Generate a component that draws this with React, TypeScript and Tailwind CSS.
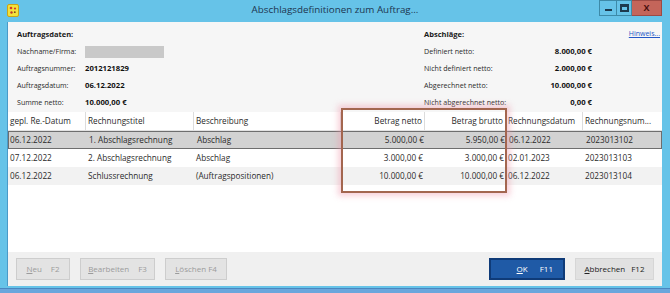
import React from 'react'

// Abschlagsdefinitionen dialog (Windows style)

const font = { fontFamily: '"Open Sans", "Liberation Sans", sans-serif' }

const columns = [
  { label: 'gepl. Re.-Datum', width: 'w-[78px]', align: 'text-left' },
  { label: 'Rechnungstitel', width: 'w-[108px]', align: 'text-left' },
  { label: 'Beschreibung', width: 'w-[147px]', align: 'text-left' },
  { label: 'Betrag netto', width: 'w-[84px]', align: 'text-right' },
  { label: 'Betrag brutto', width: 'w-[81px]', align: 'text-right' },
  { label: 'Rechnungsdatum', width: 'w-[77px]', align: 'text-left' },
  { label: 'Rechnungsnum...', width: 'w-[73px]', align: 'text-left' },
]

const rows = [
  ['06.12.2022', '1. Abschlagsrechnung', 'Abschlag', '5.000,00 €', '5.950,00 €', '06.12.2022', '2023013102'],
  ['07.12.2022', '2. Abschlagsrechnung', 'Abschlag', '3.000,00 €', '3.000,00 €', '02.01.2023', '2023013103'],
  ['06.12.2022', 'Schlussrechnung', '(Auftragspositionen)', '10.000,00 €', '10.000,00 €', '06.12.2022', '2023013104'],
]

const leftInfo = [
  { label: 'Nachname/Firma:', value: null },
  { label: 'Auftragsnummer:', value: '2012121829' },
  { label: 'Auftragsdatum:', value: '06.12.2022' },
  { label: 'Summe netto:', value: '10.000,00 €' },
]

const rightInfo = [
  { label: 'Definiert netto:', value: '8.000,00 €' },
  { label: 'Nicht definiert netto:', value: '2.000,00 €' },
  { label: 'Abgerechnet netto:', value: '10.000,00 €' },
  { label: 'Nicht abgerechnet netto:', value: '0,00 €' },
]

function AppIcon() {
  return (
    <svg width="12" height="13" viewBox="0 0 12 13">
      <rect x="0.5" y="0.5" width="11" height="12" rx="1.5" fill="#f3e23a" stroke="#c9a516" />
      <circle cx="4" cy="4" r="1.3" fill="#d33a2a" />
      <circle cx="8" cy="4.5" r="1.1" fill="#d33a2a" />
      <circle cx="4.5" cy="8.5" r="1.2" fill="#c0392b" />
      <circle cx="7.8" cy="8.2" r="0.9" fill="#7a3f1a" />
    </svg>
  )
}

function DisabledButton({ label, rest, hotkey, width }: { label: string; rest: string; hotkey: string; width: string }) {
  return (
    <div className={`${width} h-[22px] flex items-center justify-center gap-[9px] bg-[#e3e3e3] border border-[#cdcdcd] text-[8px] text-[#9b9b9b]`}>
      <span>
        <span className="underline">{label}</span>
        {rest}
      </span>
      {hotkey && <span>{hotkey}</span>}
    </div>
  )
}

export default function App() {
  return (
    <div className="w-[670px] h-[293px] bg-[#66c3e8] flex flex-col relative overflow-hidden" style={font}>
      {/* Title bar */}
      <div className="h-[22px] flex items-start relative">
        <div className="ml-[7px] mt-[4px]">
          <AppIcon />
        </div>
        <div className="absolute left-0 right-0 top-[3px] text-center text-[9.8px] text-[#1d3550]">
          Abschlagsdefinitionen zum Auftrag...
        </div>
        <div className="ml-auto mr-[8px] flex h-[16px]">
          <div className="w-[17px] border border-[#3d8aa8] border-r-0 flex items-end justify-center pb-[4px]">
            <div className="w-[7px] h-[2px] bg-[#1d3a4e]" />
          </div>
          <div className="w-[16px] border border-[#3d8aa8] flex items-center justify-center">
            <div className="w-[9px] h-[8px] border-[2px] border-[#1d3a4e] border-t-[3px]" />
          </div>
          <div className="w-[30px] bg-[#c4655a] border border-[#9d4a44] border-l-0 flex items-center justify-center text-[9px] font-bold text-[#4a1010]">
            X
          </div>
        </div>
      </div>

      {/* Client area */}
      <div className="flex-1 ml-[7px] mr-[8px] mb-[7px] flex flex-col bg-white border-l border-[#4a9ac8]">
        {/* Info panel */}
        <div className="h-[90px] bg-[#f6f6f6] flex pt-[4px]">
          <div className="w-[416px] pl-[9px]">
            <div className="h-[17px] flex items-center text-[7.5px] font-bold text-[#1a1a1a]">Auftragsdaten:</div>
            {leftInfo.map((item) => (
              <div key={item.label} className="h-[17px] flex items-center text-[7.1px] text-[#2a2a2a]">
                <span className="w-[68px]">{item.label}</span>
                {item.value ? (
                  <span className="text-[7.7px] font-bold text-[#111]">{item.value}</span>
                ) : (
                  <span className="w-[79px] h-[12px] bg-[#c9c9c9]" />
                )}
              </div>
            ))}
          </div>
          <div className="w-[168px]">
            <div className="h-[17px] flex items-center text-[7.5px] font-bold text-[#1a1a1a]">Abschläge:</div>
            {rightInfo.map((item) => (
              <div key={item.label} className="h-[17px] flex items-center justify-between text-[7.1px] text-[#2a2a2a]">
                <span>{item.label}</span>
                <span className="text-[7.7px] font-bold text-[#111]">{item.value}</span>
              </div>
            ))}
          </div>
          <div className="flex-1 flex justify-end pr-[2px]">
            <div className="h-[17px] flex items-center text-[7px] text-[#2357c7] underline">Hinweis...</div>
          </div>
        </div>

        {/* Table */}
        <div className="flex-1 bg-white flex flex-col">
          <div className="h-[19px] flex items-center border-b border-[#e2e2e2] text-[8.2px] text-[#2a2a2a]">
            {columns.map((c, i) => (
              <div
                key={c.label}
                className={`${c.width} ${c.align} h-full flex items-center ${c.align === 'text-right' ? 'justify-end' : ''} px-[2px] whitespace-nowrap ${i < columns.length - 1 ? 'border-r border-[#dcdcdc]' : ''}`}
              >
                {c.label}
              </div>
            ))}
          </div>
          {rows.map((r, ri) => (
            <div
              key={ri}
              className={`h-[18px] flex items-center text-[8.2px] text-[#2a2a2a] ${
                ri === 0 ? 'bg-[#d2d2d2] border border-[#6e6e6e]' : ri === 2 ? 'bg-[#f2f2f2]' : 'bg-white'
              }`}
            >
              {r.map((cell, ci) => (
                <div
                  key={ci}
                  className={`${columns[ci].width} flex ${columns[ci].align === 'text-right' ? 'justify-end' : ''} ${ci === 0 && ri === 0 ? 'pl-[1px]' : 'pl-[2px]'} pr-[2px] whitespace-nowrap`}
                >
                  {cell}
                </div>
              ))}
            </div>
          ))}
        </div>

        {/* Button bar */}
        <div className="h-[34px] bg-[#f0f0f0] flex items-center pl-[8px] pr-[8px] gap-[10px]">
          <DisabledButton label="N" rest="eu" hotkey="F2" width="w-[54px]" />
          <DisabledButton label="B" rest="earbeiten" hotkey="F3" width="w-[75px]" />
          <DisabledButton label="L" rest="öschen F4" hotkey="" width="w-[62px]" />
          <div className="ml-auto w-[76px] h-[22px] bg-[#1f5aa6] border-[2px] border-[#0f3b78] flex items-center justify-end pr-[10px] gap-[12px] text-[8px] text-white">
            <span>
              <span className="underline">O</span>K
            </span>
            <span>F11</span>
          </div>
          <div className="w-[79px] h-[22px] bg-[#e1e1e1] border border-[#d6d6d6] flex items-center justify-center gap-[6px] text-[8px] text-[#222]">
            <span>
              <span className="underline">A</span>bbrechen
            </span>
            <span>F12</span>
          </div>
        </div>
      </div>

      {/* Bottom frame line */}
      <div className="absolute left-0 right-0 bottom-0 h-[5px] bg-[#6aa6dc] border-t border-[#4a86c0]" />

      {/* Red highlight annotation */}
      <div className="absolute left-[341px] top-[108px] w-[166px] h-[85px] border-[2px] border-[#a3664f] shadow-[0_0_6px_3px_rgba(240,150,170,0.45)]" />
    </div>
  )
}
